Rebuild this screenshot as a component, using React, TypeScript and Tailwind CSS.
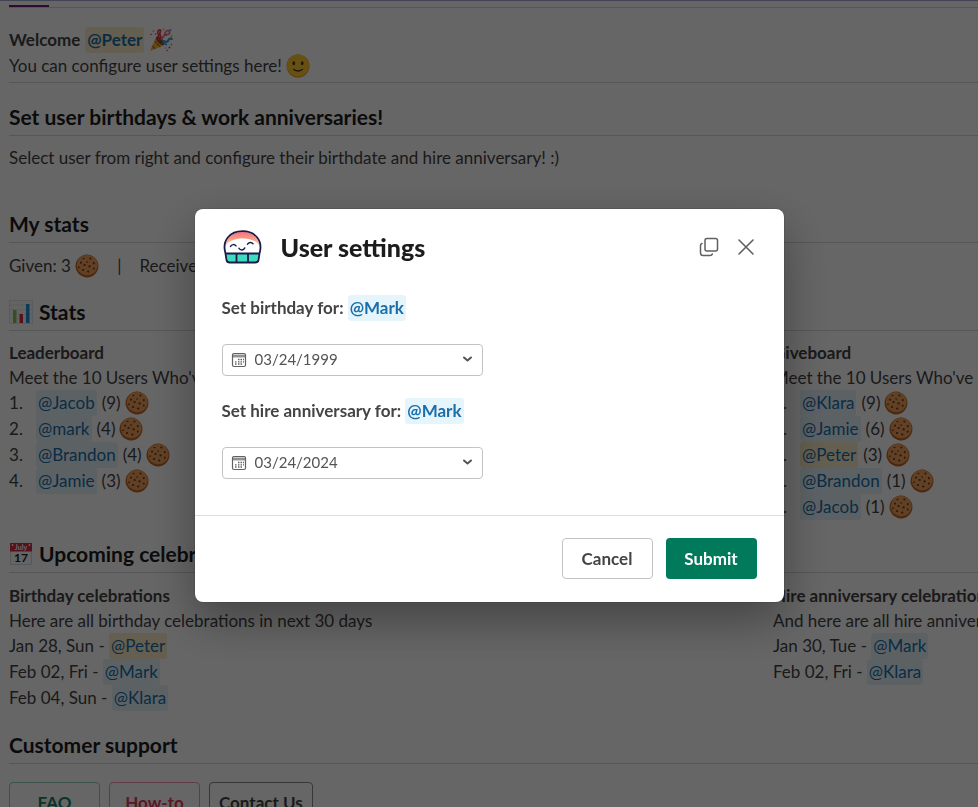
import type { ReactNode } from "react";

type Person = {
  name: string;
  count: number;
  self?: boolean;
};

const leaderboard: Person[] = [
  { name: "Jacob", count: 9 },
  { name: "mark", count: 4 },
  { name: "Brandon", count: 4 },
  { name: "Jamie", count: 3 },
];

const giveboard: Person[] = [
  { name: "Klara", count: 9 },
  { name: "Jamie", count: 6 },
  { name: "Peter", count: 3, self: true },
  { name: "Brandon", count: 1 },
  { name: "Jacob", count: 1 },
];

const birthdays = [
  { date: "Jan 28, Sun", name: "Peter", self: true },
  { date: "Feb 02, Fri", name: "Mark" },
  { date: "Feb 04, Sun", name: "Klara" },
];

const anniversaries = [
  { date: "Jan 30, Tue", name: "Mark" },
  { date: "Feb 02, Fri", name: "Klara" },
];

function Cookie() {
  return (
    <svg viewBox="0 0 24 24" className="inline-block size-6 shrink-0" aria-label="cookie">
      <path
        d="M12 .6c2.200-.3 3.900.9 5.800 1.700 1.900 1.100 3.300 2.600 4.300 4.500.9 1.700 1.500 3.400 1.300 5.400.1 2.200-.7 4.200-1.800 6-1.300 1.900-2.900 3.300-5 4.300-1.700.8-3.300 1-5.200.9-2.100-.1-4.100-.8-5.900-2.100-1.700-1.200-3-2.700-3.800-4.600C.7 15 .4 13.300.6 11.400c.1-2.200.8-4 2.100-5.800C4 3.700 5.600 2.300 7.700 1.400 9.100.8 10.500.6 12 .6Z"
        fill="#bf6424"
      />
      <path
        d="M12 .9c2 0 3.800.6 5.500 1.600 1.800 1 3.200 2.400 4.100 4.200.8 1.500 1.100 3 1 4.800-.1 2-.6 3.700-1.700 5.300-1.200 1.700-2.700 2.900-4.700 3.700-1.600.6-3.200.9-5 .7-2-.2-3.800-.8-5.400-2.100-1.500-1.200-2.700-2.500-3.300-4.300-.6-1.500-.8-3-.6-4.700.2-1.900.9-3.500 2-5 1.200-1.700 2.600-2.800 4.400-3.500C9.500 1.100 10.700.9 12 .9Z"
        fill="#f0a35c"
      />
      <g fill="#7a3a20">
        <ellipse cx="8.500" cy="4.500" rx="1.100" ry=".8" />
        <ellipse cx="15.400" cy="4.600" rx="1.100" ry="1" />
        <ellipse cx="12.200" cy="8" rx=".9" ry=".8" />
        <ellipse cx="6" cy="8.600" rx="1" ry="1.200" />
        <ellipse cx="9.600" cy="11" rx="1.200" ry="1" />
        <ellipse cx="18.800" cy="9.200" rx="1" ry="1.100" />
        <ellipse cx="4" cy="13.200" rx=".8" ry="1" />
        <ellipse cx="14.600" cy="12.400" rx="1.200" ry="1.100" />
        <ellipse cx="8" cy="16" rx="1.200" ry="1" />
        <ellipse cx="18.800" cy="14.600" rx=".9" ry="1.200" />
        <ellipse cx="13.200" cy="17.600" rx="1.200" ry="1" />
      </g>
    </svg>
  );
}

function Smile() {
  return (
    <svg viewBox="0 0 24 24" className="size-6 shrink-0" aria-label="smile">
      <circle cx="12" cy="12" r="11.500" fill="#ee9b1f" />
      <circle cx="12" cy="11.500" r="11" fill="#ffcb2e" />
      <ellipse cx="7.800" cy="9.200" rx="1.300" ry="2" fill="#4a3524" />
      <ellipse cx="16.200" cy="9.200" rx="1.300" ry="2" fill="#4a3524" />
      <path d="M7.800 15.500c2.600 1.900 5.800 1.900 8.400 0" stroke="#4a3524" strokeWidth="1.400" strokeLinecap="round" fill="none" />
    </svg>
  );
}

function Tada() {
  return (
    <svg viewBox="0 0 24 24" className="size-6 shrink-0" aria-label="tada">
      <path d="M1 23 7.300 8.800c3.300 1 6.800 4.700 8 8.200L1 23Z" fill="#f5b32e" />
      <path d="m5.500 13 5.800 6M3.300 18l3 3" stroke="#d3761b" strokeWidth="1.600" />
      <ellipse cx="11.300" cy="12.700" rx="2.600" ry="5.600" transform="rotate(-44 11.300 12.700)" fill="#8a4b1f" />
      <path d="M10 12c-1.500-3 .5-4-1-6.500C8.200 4 9.500 1.200 11.200 2c1.500 1-1.200 3-.2 4.500 1 1.800 1 3.500.8 5.500" fill="none" stroke="#e8384d" strokeWidth="1.700" />
      <path d="M12.500 12c.5-3 2.200-2.800 3-5 .8-2 .5-4 3-4.500 2-.3 2.800 2 1.500 3.300-1 1-2.700.2-3.500 2" fill="none" stroke="#f06a86" strokeWidth="1.700" />
      <path d="M13 13.500c2.500-1.500 3.200 1 5 .3 1.700-.7 1.200-3 3-3.300 1.300-.2 1.800.7 2 1.500" fill="none" stroke="#2f9fe0" strokeWidth="2.200" />
      <path d="M13.500 15c2-.4 3 1.300 4.500 2" fill="none" stroke="#2f9fe0" strokeWidth="1.500" />
      <g fill="#f5b32e">
        <circle cx="4.500" cy="3" r=".9" />
        <circle cx="14.500" cy="1.500" r=".9" />
        <circle cx="22.500" cy="8" r=".9" />
        <circle cx="16.500" cy="20" r=".8" />
      </g>
      <g fill="#e8384d">
        <circle cx="2" cy="6.500" r=".8" />
        <circle cx="20.500" cy="19.500" r="1" />
        <circle cx="22.500" cy="16.500" r=".7" />
        <circle cx="18.300" cy="22.500" r=".8" />
        <circle cx="6.500" cy="6" r=".8" />
      </g>
      <circle cx="21.500" cy="2" r=".9" fill="#2f9fe0" />
    </svg>
  );
}

function BarChart() {
  return (
    <svg viewBox="0 0 24 24" className="size-6 shrink-0" aria-hidden="true">
      <path d="M.5.500h23v23H.5z" fill="#f9f9f9" stroke="#dfe3e5" />
      <path d="M1 5h22M1 9.500h22M1 14h22M1 18.500h22" stroke="#e4e8ea" />
      <path d="M4 10h3.500v13H4z" fill="#8cc152" />
      <path d="M10.500 14H14v9h-3.500z" fill="#dd2e44" />
      <path d="M17 4h3.500v19H17z" fill="#1a94e0" />
    </svg>
  );
}

function CalendarEmoji() {
  return (
    <svg viewBox="0 0 24 24" className="size-6 shrink-0" aria-hidden="true">
      <path d="M1.500 2h21v20.500h-21z" fill="#fcfcfc" stroke="#d5dadc" />
      <path d="M1 1h22v8.500H1z" fill="#dd2e44" />
      <circle cx="3.500" cy="3" r=".9" fill="#fff" />
      <circle cx="20.500" cy="3" r=".9" fill="#fff" />
      <text x="12" y="7.500" textAnchor="middle" fontSize="7" fill="#fff">
        July
      </text>
      <text x="12" y="20" textAnchor="middle" fontSize="12" fontWeight="700" fill="#1d1c1d">
        17
      </text>
    </svg>
  );
}

function AppLogo() {
  return (
    <svg viewBox="0 0 40 36" className="h-9 w-10 shrink-0" aria-hidden="true">
      <defs>
        <linearGradient id="cap" x1="0" y1="0" x2="0" y2="1">
          <stop offset="0" stopColor="#f5717f" />
          <stop offset="0.400" stopColor="#fa9482" />
          <stop offset="1" stopColor="#ffd9b0" />
        </linearGradient>
      </defs>
      <path d="M3 24C.5 11 9 2.500 20.500 2.500S40.500 11 38 24Z" fill="#fff" />
      <path d="M3 18C4 8.500 11.500 2.500 20.500 2.500S37 8.500 38 18c-1.500-3.500-4-5.500-7.500-6.800-2.500-1-6-1.700-10-1.700s-7.500.7-10 1.700C7 12.500 4.500 14.500 3 18Z" fill="url(#cap)" />
      <path d="M3.500 24.500h34l-1 6.500c-.4 2-1.600 2.500-3.300 2.500H7.800c-1.700 0-2.900-.5-3.300-2.500l-1-6.500Z" fill="#3ddcc0" />
      <path
        d="M3.500 24.500C-.5 11 8.500 2.200 20.500 2.200s21 8.800 17 22.300m-34 0h34m-34 0 1 6.500c.4 2 1.600 2.500 3.300 2.500h25.400c1.700 0 2.900-.5 3.300-2.500l1-6.500M14.500 24.500v9m11.500-9v9"
        fill="none"
        stroke="#1b1b4b"
        strokeWidth="1.800"
        strokeLinejoin="round"
      />
      <path
        d="M8.500 17.500c1.100-2.300 4-2.500 5.500-.6M25.500 15.300c1.100-2.300 4-2.500 5.500-.6M17 19.300c1 2.200 4.700 2.400 5.700-.3"
        fill="none"
        stroke="#1b1b4b"
        strokeWidth="1.500"
        strokeLinecap="round"
      />
    </svg>
  );
}

function Mention({ name, self = false }: { name: string; self?: boolean }) {
  return (
    <a
      href={`#${name}`}
      className={`inline-block rounded-[3px] px-0.5 text-[#1a6fab] ${self ? "bg-[#fbedc8]" : "bg-[#e6f4fb]"}`}
    >
      @{name}
    </a>
  );
}

function Heading({ icon, children }: { icon?: ReactNode; children: ReactNode }) {
  return (
    <h2 className="flex items-center gap-[6px] border-b border-[#d8d8d8] pb-[6px] text-[21px] leading-6 font-bold text-[#1d1c1d]">
      {icon}
      {children}
    </h2>
  );
}

function Board({ title, text, people }: { title: string; text: string; people: Person[] }) {
  return (
    <div>
      <h3 className="leading-[25px] font-bold">{title}</h3>
      <p className="leading-[25px]">{text}</p>
      <ol>
        {people.map((person, index) => (
          <li key={person.name} className="flex items-center">
            <span className="w-[27px]">{index + 1}.</span>
            <Mention name={person.name} self={person.self} />
            <span className="mr-1 ml-[5px]">({person.count})</span>
            <Cookie />
          </li>
        ))}
      </ol>
    </div>
  );
}

function Celebrations({
  title,
  text,
  items,
}: {
  title: string;
  text: string;
  items: { date: string; name: string; self?: boolean }[];
}) {
  return (
    <div>
      <h3 className="leading-[25px] font-bold">{title}</h3>
      <p className="leading-[25px]">{text}</p>
      <ul>
        {items.map((item) => (
          <li key={item.name}>
            {item.date} - <Mention name={item.name} self={item.self} />
          </li>
        ))}
      </ul>
    </div>
  );
}

function DateField({ id, label, value }: { id: string; label: string; value: string }) {
  return (
    <div>
      <div className="font-bold text-[#454445]">
        <label htmlFor={id}>{label}</label> <Mention name="Mark" />
      </div>
      <div className="mt-[23px] flex h-8 w-[261px] items-center rounded border border-[#c4c3c4] px-2">
        <svg viewBox="0 0 16 16" className="size-4 shrink-0" fill="none" stroke="#616061" aria-hidden="true">
          <rect x="1.500" y="1.500" width="13" height="13" rx="1.500" strokeWidth="1.200" />
          <path d="M1.500 3.200h13M1.500 4.800h13" />
          <path d="M7 7.500h1.500M9.500 7.500H11M12 7.500h1M4 9.800h1.500M7 9.800h1.500M9.500 9.800H11M12 9.800h1M4 12h1.500M7 12h1.500M9.500 12H11" strokeWidth="1.300" />
        </svg>
        <input
          id={id}
          type="text"
          defaultValue={value}
          className="ml-2 min-w-0 flex-1 bg-transparent pb-0.5 text-[15px] text-[#555455] outline-none"
        />
        <svg viewBox="0 0 12 12" className="size-3 shrink-0" fill="none" stroke="#555455" strokeWidth="2" aria-hidden="true">
          <path d="m2 3.500 3.500 3L9 3.500" strokeLinejoin="round" strokeLinecap="round" />
        </svg>
      </div>
    </div>
  );
}

function HomePage() {
  return (
    <div className="text-[#444344]">
      <div className="border-t border-[#a9a8d8]">
        <div className="ml-[9px] flex h-[7px] items-end border-b border-[#d8d8d8]">
          <div className="h-0.5 w-10 bg-[#7c1a80]" />
        </div>
      </div>
      <main className="pt-[19px] pl-[9px] whitespace-nowrap">
        <div className="border-b border-[#d8d8d8] pb-[3px]">
          <p className="flex items-center gap-[5px] font-bold">
            Welcome <Mention name="Peter" self />
            <Tada />
          </p>
          <p className="flex items-center gap-1">
            You can configure user settings here! <Smile />
          </p>
        </div>

        <section className="mt-[22px]">
          <Heading>Set user birthdays &amp; work anniversaries!</Heading>
          <p className="mt-[9px]">Select user from right and configure their birthdate and hire anniversary! :)</p>
        </section>

        <section className="mt-[41px]">
          <Heading>My stats</Heading>
          <p className="mt-[10px] flex items-center">
            Given: 3&nbsp;
            <Cookie />
            <span className="mx-[18px]">|</span>
            Received: 3&nbsp;
            <Cookie />
          </p>
        </section>

        <section className="mt-[21px]">
          <Heading icon={<BarChart />}>Stats</Heading>
          <div className="mt-[9px] grid grid-cols-[764px_auto]">
            <Board title="Leaderboard" text="Meet the 10 Users Who've Received Most Cookies" people={leaderboard} />
            <Board title="Giveboard" text="Meet the 10 Users Who've Given Most Cookies" people={giveboard} />
          </div>
        </section>

        <section className="mt-[22px]">
          <Heading icon={<CalendarEmoji />}>Upcoming celebrations</Heading>
          <div className="mt-[10px] grid grid-cols-[764px_auto]">
            <Celebrations title="Birthday celebrations" text="Here are all birthday celebrations in next 30 days" items={birthdays} />
            <Celebrations
              title="Hire anniversary celebrations"
              text="And here are all hire anniversaries in next 30 days"
              items={anniversaries}
            />
          </div>
        </section>

        <section className="mt-[22px]">
          <Heading>Customer support</Heading>
          <div className="mt-[18px] flex gap-[9px] font-bold">
            <button className="h-[41px] w-[91px] rounded border border-[#8fd0bd] text-[#148567]">FAQ</button>
            <button className="h-[41px] w-[91px] rounded border border-[#f596ab] text-[#e8385f]">How-to</button>
            <button className="h-[41px] rounded border border-[#8a898a] px-[9px]">Contact Us</button>
          </div>
        </section>
      </main>
    </div>
  );
}

function SettingsDialog() {
  return (
    <div className="fixed inset-0 flex items-center justify-center bg-black/60 pt-1">
      <div
        role="dialog"
        aria-modal="true"
        aria-labelledby="dialog-title"
        className="w-[589px] max-w-full rounded-lg bg-white text-[#1d1c1d] shadow-[0_0_0_1px_rgba(29,28,29,0.13),0_18px_48px_0_rgba(0,0,0,0.35)]"
      >
        <header className="flex items-center pt-5 pr-7 pl-[27px]">
          <AppLogo />
          <h1 id="dialog-title" className="ml-[19px] flex-1 text-[25px] leading-9 font-black">
            User settings
          </h1>
          <button aria-label="Open in new window" className="text-[#616061]">
            <svg viewBox="0 0 20 20" className="size-5" fill="none" stroke="currentColor" strokeWidth="1.500" strokeLinecap="round">
              <rect x="6" y="1.500" width="12.500" height="12.500" rx="2" />
              <path d="M3 6.500c-1 .3-1.500 1-1.500 2v7.500c0 1.500 1 2.500 2.500 2.500h7c1.200 0 2-.5 2.300-1.500" />
            </svg>
          </button>
          <button aria-label="Close" className="ml-[17px] text-[#616061]">
            <svg viewBox="0 0 20 20" className="size-5" fill="none" stroke="currentColor" strokeWidth="1.600" strokeLinecap="round">
              <path d="m3 3 14 14M17 3 3 17" />
            </svg>
          </button>
        </header>
        <form onSubmit={(event) => event.preventDefault()}>
          <div className="space-y-[22px] px-[27px] pt-[30px] pb-9">
            <DateField id="birthday" label="Set birthday for:" value="03/24/1999" />
            <DateField id="hire-date" label="Set hire anniversary for:" value="03/24/2024" />
          </div>
          <footer className="flex justify-end gap-[13px] border-t border-[#dddddd] px-[27px] pt-[22px] pb-[23px] font-bold">
            <button type="button" className="h-[41px] w-[91px] rounded border border-[#c4c3c4] text-[#454445]">
              Cancel
            </button>
            <button type="submit" className="h-[41px] w-[91px] rounded bg-[#007a5a] text-white">
              Submit
            </button>
          </footer>
        </form>
      </div>
    </div>
  );
}

export default function App() {
  return (
    <div className="h-screen overflow-hidden bg-white font-[Lato,sans-serif] text-[17px] leading-[26px]">
      <HomePage />
      <SettingsDialog />
    </div>
  );
}
